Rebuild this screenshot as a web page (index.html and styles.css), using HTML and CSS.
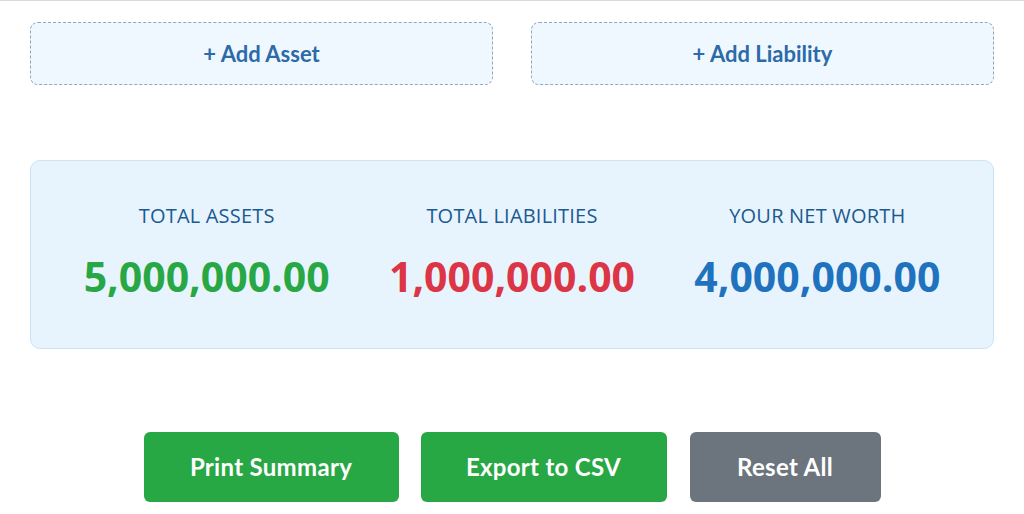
FILE: index.html
```html
<!DOCTYPE html>
<html lang="en">
<head>
<meta charset="utf-8">
<title>Net Worth</title>
<link rel="stylesheet" href="styles.css">
</head>
<body>
<div class="topline"></div>
<main class="page">
  <div class="add-row">
    <button class="add-btn">+ Add Asset</button>
    <button class="add-btn">+ Add Liability</button>
  </div>
  <section class="summary">
    <div class="stat">
      <div class="stat-label">TOTAL ASSETS</div>
      <div class="stat-value green">5,000,000.00</div>
    </div>
    <div class="stat">
      <div class="stat-label">TOTAL LIABILITIES</div>
      <div class="stat-value red">1,000,000.00</div>
    </div>
    <div class="stat">
      <div class="stat-label">YOUR NET WORTH</div>
      <div class="stat-value blue">4,000,000.00</div>
    </div>
  </section>
  <div class="actions">
    <button class="act green-bg btn-print">Print Summary</button>
    <button class="act green-bg btn-export">Export to CSV</button>
    <button class="act gray-bg btn-reset">Reset All</button>
  </div>
</main>
</body>
</html>
```
FILE: styles.css
```css
html, body {
  margin: 0;
  padding: 0;
  background: #ffffff;
}
body {
  font-family: "Lato", "Open Sans", sans-serif;
  width: 1024px;
  height: 514px;
  overflow: hidden;
}
.topline {
  height: 1px;
  background: #d9d9d9;
}
.page {
  padding: 21px 30px 0 30px;
}
.add-row {
  display: grid;
  grid-template-columns: 1fr 1fr;
  column-gap: 38px;
}
.add-btn {
  height: 63px;
  padding: 0;
  background: #f0f8ff;
  border: 1px dashed #8ea8bf;
  border-radius: 8px;
  color: #2c6aa8;
  font-family: "Lato", "Open Sans", sans-serif;
  font-weight: 700;
  font-size: 22px;
  line-height: 1;
  cursor: pointer;
}
.summary {
  margin-top: 75px;
  height: 189px;
  box-sizing: border-box;
  background: #e8f4fd;
  border: 1px solid #cde2f3;
  border-radius: 10px;
  display: grid;
  grid-template-columns: 1fr 1fr 1fr;
  padding: 41px 23px 0 23px;
  align-items: start;
}
.stat {
  text-align: center;
  display: flex;
  flex-direction: column;
  align-items: center;
  gap: 21px;
}
.stat-label {
  font-family: "Open Sans", sans-serif;
  font-weight: 500;
  font-size: 20px;
  line-height: 28px;
  color: #1a5a91;
  letter-spacing: 0.2px;
}
.stat-value {
  font-family: "Open Sans", sans-serif;
  font-weight: 700;
  font-size: 41px;
  line-height: 50px;
  letter-spacing: 0;
}
.green { color: #28a745; }
.red { color: #dc3545; }
.blue { color: #1f72bd; }
.actions {
  margin-top: 83px;
  display: flex;
  justify-content: center;
  gap: 22px;
}
.act {
  height: 70px;
  border: none;
  border-radius: 6px;
  color: #ffffff;
  font-family: "Lato", "Open Sans", sans-serif;
  font-weight: 700;
  font-size: 24px;
  letter-spacing: 0.3px;
  line-height: 1;
  padding: 0;
  cursor: pointer;
}
.btn-print { width: 255px; }
.btn-export { width: 246px; }
.btn-reset { width: 191px; margin-left: 1px; }
.green-bg { background: #28a745; }
.gray-bg { background: #6c757d; }
```
